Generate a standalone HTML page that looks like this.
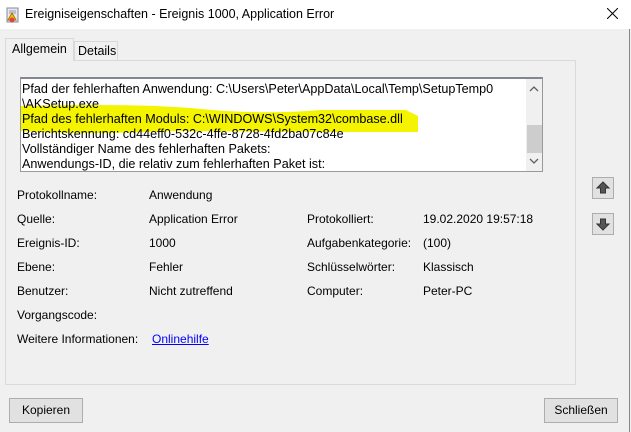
<!DOCTYPE html>
<html><head><meta charset="utf-8"><style>
*{margin:0;padding:0;box-sizing:border-box}
body{width:631px;height:432px;background:#f0f0f0;font-family:"Liberation Sans",sans-serif;font-size:12px;color:#000;position:relative;overflow:hidden}
.title{position:absolute;left:0;top:0;width:631px;height:29px;background:#fff}
.title span{position:absolute;left:25px;top:7px;font-size:12.5px}
.abs{position:absolute;white-space:nowrap}
.tab{position:absolute;border:1px solid #d9d9d9;background:#f0f0f0}
.panel{position:absolute;left:5px;top:60px;width:571px;height:325px;border:1px solid #d9d9d9;background:#f0f0f0}
.box{position:absolute;left:20px;top:77px;width:523px;height:95px;background:#fff;border:1px solid #999;border-top:2px solid #828790;overflow:hidden}
.box div{position:absolute;left:1px;white-space:nowrap;font-size:12.6px}
.btn{position:absolute;height:25px;border:1px solid #adadad;background:#e1e1e1;text-align:center;line-height:23px}
.ab{position:absolute;left:592px;width:22px;height:22px;border:1px solid #adadad;background:#e1e1e1}
</style></head><body>
<div class="title">
<svg style="position:absolute;left:6px;top:7px" width="14" height="16"><rect x="1" y="1" width="11" height="14" fill="#e8e8f0" stroke="#889"/><path d="M3 4h7M3 6h7" stroke="#99a"/><path d="M6 6l4 7H2z" fill="#f3c400" stroke="#a70"/><circle cx="6" cy="13" r="2.5" fill="#d44"/></svg>
<span>Ereigniseigenschaften - Ereignis 1000, Application Error</span>
<svg style="position:absolute;left:607px;top:8px" width="11" height="11"><path d="M0 0L11 11M11 0L0 11" stroke="#000" stroke-width="1"/></svg>
</div>
<div class="panel"></div>
<div class="tab" style="left:5px;top:38px;width:69px;height:23px;border-bottom:none;background:#f0f0f0;z-index:2"></div>
<div class="abs" style="left:12px;top:42px;font-size:12.5px;z-index:3">Allgemein</div>
<div class="tab" style="left:74px;top:41px;width:44px;height:20px;background:#f0f0f0"></div>
<div class="abs" style="left:78px;top:44px;font-size:12.5px">Details</div>
<div class="box">
<svg style="position:absolute;left:0;top:0" width="523" height="95"><path d="M0 27 Q120 24 180 30 T300 31 L385 31 L397 37 L397 53 L300 53 L150 52 Q60 56 0 52Z" fill="#f4f400"/></svg>
<div style="top:3px">Pfad der fehlerhaften Anwendung: C:\Users\Peter\AppData\Local\Temp\SetupTemp0</div>
<div style="top:18px">\AKSetup.exe</div>
<div style="top:33px">Pfad des fehlerhaften Moduls: C:\WINDOWS\System32\combase.dll</div>
<div style="top:48px">Berichtskennung: cd44eff0-532c-4ffe-8728-4fd2ba07c84e</div>
<div style="top:63px">Vollständiger Name des fehlerhaften Pakets:</div>
<div style="top:78px">Anwendungs-ID, die relativ zum fehlerhaften Paket ist:</div>
<div style="left:505px;top:0;width:17px;height:93px;background:#f0f0f0"></div>
<div style="left:506px;top:46px;width:15px;height:28px;background:#cdcdcd"></div>
<svg style="position:absolute;left:508px;top:6px" width="10" height="80"><path d="M1 6L5 2L9 6" fill="none" stroke="#606060" stroke-width="1.3"/><path d="M1 74L5 78L9 74" fill="none" stroke="#606060" stroke-width="1.3"/></svg>
</div>
<div class="abs" style="left:17px;top:188px">Protokollname:</div><div class="abs" style="left:149px;top:188px">Anwendung</div>
<div class="abs" style="left:17px;top:212px">Quelle:</div><div class="abs" style="left:149px;top:212px">Application Error</div>
<div class="abs" style="left:307px;top:212px">Protokolliert:</div><div class="abs" style="left:423px;top:212px">19.02.2020 19:57:18</div>
<div class="abs" style="left:17px;top:236px">Ereignis-ID:</div><div class="abs" style="left:149px;top:236px">1000</div>
<div class="abs" style="left:307px;top:236px">Aufgabenkategorie:</div><div class="abs" style="left:423px;top:236px">(100)</div>
<div class="abs" style="left:17px;top:260px">Ebene:</div><div class="abs" style="left:149px;top:260px">Fehler</div>
<div class="abs" style="left:307px;top:260px">Schlüsselwörter:</div><div class="abs" style="left:423px;top:260px">Klassisch</div>
<div class="abs" style="left:17px;top:284px">Benutzer:</div><div class="abs" style="left:149px;top:284px">Nicht zutreffend</div>
<div class="abs" style="left:307px;top:284px">Computer:</div><div class="abs" style="left:423px;top:284px">Peter-PC</div>
<div class="abs" style="left:17px;top:308px">Vorgangscode:</div>
<div class="abs" style="left:17px;top:332px">Weitere Informationen:</div><div class="abs" style="left:152px;top:332px;color:#00f;text-decoration:underline">Onlinehilfe</div>
<div class="ab" style="top:177px"><svg width="20" height="20"><path d="M10 4L16 10H12.5V15H7.5V10H4Z" fill="#555" stroke="#333"/></svg></div>
<div class="ab" style="top:213px"><svg width="20" height="20"><path d="M10 16L16 10H12.5V5H7.5V10H4Z" fill="#555" stroke="#333"/></svg></div>
<div class="btn" style="left:9px;top:398px;width:74px">Kopieren</div>
<div class="btn" style="left:544px;top:398px;width:74px">Schließen</div>
<div style="position:absolute;left:629px;top:29px;width:1px;height:403px;background:#888"></div>
</body></html>
